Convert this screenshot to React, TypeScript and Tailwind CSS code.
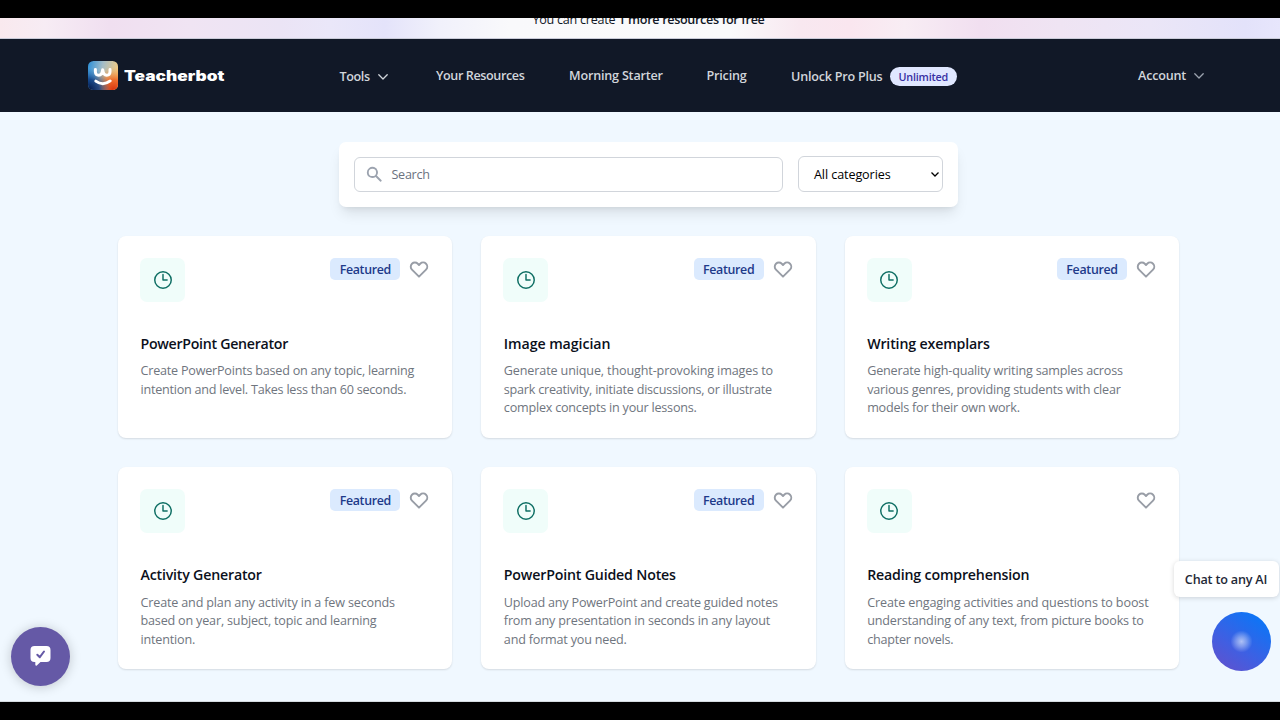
import React from "react";

type Line = { text: string; tracking: string };
type Tool = { title: string; titleTracking?: string; lines: Line[]; featured: boolean };

const tools: Tool[] = [
  {
    title: "PowerPoint Generator",
    titleTracking: "tracking-[-0.29px]",
    lines: [
      { text: "Create PowerPoints based on any topic, learning", tracking: "tracking-[-0.22px]" },
      { text: "intention and level. Takes less than 60 seconds.", tracking: "tracking-[-0.24px]" },
    ],
    featured: true,
  },
  {
    title: "Image magician",
    titleTracking: "tracking-[-0.08px]",
    lines: [
      { text: "Generate unique, thought-provoking images to", tracking: "tracking-[-0.14px]" },
      { text: "spark creativity, initiate discussions, or illustrate", tracking: "tracking-[-0.23px]" },
      { text: "complex concepts in your lessons.", tracking: "tracking-[-0.22px]" },
    ],
    featured: true,
  },
  {
    title: "Writing exemplars",
    lines: [
      { text: "Generate high-quality writing samples across", tracking: "tracking-[-0.18px]" },
      { text: "various genres, providing students with clear", tracking: "tracking-[-0.2px]" },
      { text: "models for their own work.", tracking: "tracking-[-0.22px]" },
    ],
    featured: true,
  },
  {
    title: "Activity Generator",
    titleTracking: "tracking-[-0.2px]",
    lines: [
      { text: "Create and plan any activity in a few seconds", tracking: "tracking-[-0.17px]" },
      { text: "based on year, subject, topic and learning", tracking: "tracking-[-0.19px]" },
      { text: "intention.", tracking: "tracking-[-0.18px]" },
    ],
    featured: true,
  },
  {
    title: "PowerPoint Guided Notes",
    titleTracking: "tracking-[-0.18px]",
    lines: [
      { text: "Upload any PowerPoint and create guided notes", tracking: "tracking-[-0.2px]" },
      { text: "from any presentation in seconds in any layout", tracking: "tracking-[-0.19px]" },
      { text: "and format you need.", tracking: "tracking-[-0.2px]" },
    ],
    featured: true,
  },
  {
    title: "Reading comprehension",
    titleTracking: "tracking-[-0.18px]",
    lines: [
      { text: "Create engaging activities and questions to boost", tracking: "tracking-[-0.13px]" },
      { text: "understanding of any text, from picture books to", tracking: "tracking-[-0.18px]" },
      { text: "chapter novels.", tracking: "tracking-[-0.22px]" },
    ],
    featured: false,
  },
];

function Chevron({ className }: { className: string }) {
  return (
    <svg className={className} viewBox="0 0 10 6" fill="none" stroke="currentColor" strokeWidth="1.3" strokeLinecap="round" strokeLinejoin="round">
      <path d="M0.8 0.8 L5 5 L9.2 0.8" />
    </svg>
  );
}

function Logo() {
  return (
    <svg className="h-[29px] w-[30px] shrink-0" viewBox="0 0 30 30" preserveAspectRatio="none">
      <defs>
        <linearGradient id="base" x1="0" y1="0" x2="1" y2="0.2">
          <stop offset="0" stopColor="#2b8fd8" />
          <stop offset="0.5" stopColor="#a3bdc8" />
          <stop offset="1" stopColor="#f0cb86" />
        </linearGradient>
        <radialGradient id="navy" cx="0" cy="1" r="0.75">
          <stop offset="0" stopColor="#03123f" />
          <stop offset="0.5" stopColor="#0a3b82" stopOpacity="0.85" />
          <stop offset="1" stopColor="#1c6fc0" stopOpacity="0" />
        </radialGradient>
        <radialGradient id="flame" cx="0.85" cy="1" r="0.8">
          <stop offset="0" stopColor="#d8330f" />
          <stop offset="0.45" stopColor="#ee6a28" stopOpacity="0.95" />
          <stop offset="1" stopColor="#f8a94a" stopOpacity="0" />
        </radialGradient>
        <clipPath id="tile"><rect width="30" height="30" rx="5.5" /></clipPath>
      </defs>
      <g clipPath="url(#tile)">
        <rect width="30" height="30" fill="url(#base)" />
        <rect width="30" height="30" fill="url(#flame)" />
        <rect width="30" height="30" fill="url(#navy)" />
      </g>
      <g fill="none" stroke="#fff" strokeWidth="3" strokeLinecap="round" strokeLinejoin="round">
        <path d="M7.4 8.8 V11.4 Q7.6 14.8 10.6 14.8 Q14.2 14.6 14.7 9 Q15.2 14.6 18.8 14.8 Q21.8 14.8 22 11.4 V8.8" />
        <path d="M7.8 20.8 Q15 26.2 22.2 20.6" />
      </g>
    </svg>
  );
}

function Card({ tool }: { tool: Tool }) {
  return (
    <article className="flex h-[202px] flex-col rounded-[8px] bg-white px-[22px] pt-[22px] shadow-[0_1px_2px_rgba(0,0,0,0.12)]">
      <div className="flex items-start justify-between">
        <div className="flex h-[44px] w-[45px] items-center justify-center rounded-[7px] bg-[#f0fdfa] text-[#0f6f64]">
          <svg className="h-[22px] w-[22px]" viewBox="0 0 24 24" fill="none" stroke="currentColor" strokeWidth="1.6" strokeLinecap="round" strokeLinejoin="round">
            <path d="M12 6v6h4.5m4.5 0a9 9 0 1 1-18 0 9 9 0 0 1 18 0Z" />
          </svg>
        </div>
        <div className="flex items-center gap-[8px]">
          {tool.featured && (
            <span className="flex h-[22px] w-[70px] items-center justify-center rounded-[5px] bg-[#dbeafe] pt-[2px] text-[12.4px] font-semibold tracking-[-0.32px] text-[#1e3a8a]">
              Featured
            </span>
          )}
          <svg className="h-[22px] w-[22px] text-[#989da6]" viewBox="0 0 24 24" fill="none" stroke="currentColor" strokeWidth="2.1" strokeLinecap="round" strokeLinejoin="round">
            <path d="M4.318 6.318a4.5 4.5 0 0 0 0 6.364L12 20.364l7.682-7.682a4.5 4.5 0 0 0-6.364-6.364L12 7.636l-1.318-1.318a4.5 4.5 0 0 0-6.364 0z" />
          </svg>
        </div>
      </div>
      <h3 className={`mt-[31px] pl-[0.5px] text-[14.2px] leading-[22px] font-semibold text-[#0b101b] ${tool.titleTracking ?? "tracking-[-0.16px]"}`}>{tool.title}</h3>
      <p className="mt-[7.4px] pl-[0.5px] text-[12.6px] leading-[18.45px] whitespace-nowrap text-[#6f757e]">
        {tool.lines.map((line) => (
          <span key={line.text} className={`block ${line.tracking}`}>{line.text}</span>
        ))}
      </p>
    </article>
  );
}

export default function App() {
  return (
    <div className="relative flex h-[720px] w-[1280px] flex-col overflow-hidden bg-black py-[18px] font-['Open_Sans',sans-serif]">
      <div className="flex h-[21px] shrink-0 items-start justify-center overflow-hidden border-b border-[#c9cbd8] bg-[linear-gradient(90deg,#f9e9ee_0px,#f7ecf4_45px,#f0dff0_110px,#f0e4f3_190px,#ebe4f5_280px,#eae7f9_330px,#e4e3fa_385px,#f1f1fb_440px,#f9f9fb_510px,#fafafb_730px,#f8e8f0_800px,#fae6ef_850px,#f8edf4_905px,#f1dff0_980px,#efe4f3_1060px,#ebe6f7_1150px,#e3e2fa_1245px,#e7e6fc_1280px)] pl-[17px]">
        <p className="mt-[-8px] text-[12.6px] leading-[20px] tracking-[-0.26px] whitespace-nowrap text-[#111827]">
          You can create <b className="font-semibold tracking-[-0.33px]">1 more resources for free</b>
        </p>
      </div>

      <header className="flex h-[73px] shrink-0 items-center bg-[#111827] text-[12.6px] font-semibold tracking-[-0.2px] whitespace-nowrap text-[#d1d5db]">
        <a className="ml-[88px] flex w-[251.5px] items-center gap-[5.5px]">
          <Logo />
          <span className="origin-left scale-x-[1.22] font-['Inter',sans-serif] text-[14.2px] leading-[20px] font-black tracking-normal text-white">Teacherbot</span>
        </a>
        <nav className="flex flex-1 items-center">
          <a className="flex w-[96.5px] items-center gap-[8px] pt-[3px] tracking-[-0.4px]">Tools <Chevron className="h-[6px] w-[10px]" /></a>
          <a className="w-[133px] pt-[2px] tracking-[-0.4px]">Your Resources</a>
          <a className="w-[137.5px] pt-[2px]">Morning Starter</a>
          <a className="w-[84.5px] pt-[2px]">Pricing</a>
          <a className="flex items-center gap-[7px] pt-[3px] tracking-[-0.22px]">
            Unlock Pro Plus
            <span className="mb-[1.5px] flex h-[19px] w-[67.5px] items-center justify-center rounded-full bg-[#e0e7ff] pt-[1.5px] text-[10.8px] font-semibold text-[#3730a3]">Unlimited</span>
          </a>
        </nav>
        <a className="flex w-[142px] items-center gap-[8px] pt-[2px]">Account <Chevron className="h-[6px] w-[10px] text-[#9ca3af]" /></a>
      </header>

      <main className="flex flex-1 flex-col border-b border-[#d5dbe0] bg-[#f0f8ff] pt-[30px]">
        <section className="ml-[339px] flex h-[64.5px] w-[619px] items-start gap-[15px] rounded-[7px] bg-white px-[15px] pt-[14px] text-[12.6px] shadow-[0_9px_14px_-3px_rgba(0,0,0,0.1),0_4px_6px_-4px_rgba(0,0,0,0.1)]">
          <div className="mt-[1px] flex h-[35px] flex-1 items-center gap-[8px] rounded-[6px] border border-[#d1d5db] pl-[10px] tracking-[-0.3px] text-[#6b7280]">
            <svg className="h-[18.5px] w-[18.5px] text-[#9ca3af]" viewBox="0 0 20 20" fill="currentColor">
              <path fillRule="evenodd" clipRule="evenodd" d="M8 4a4 4 0 1 0 0 8 4 4 0 0 0 0-8ZM2 8a6 6 0 1 1 10.89 3.476l4.817 4.817a1 1 0 0 1-1.414 1.414l-4.816-4.816A6 6 0 0 1 2 8Z" />
            </svg>
            <span className="pt-[1px]">Search</span>
          </div>
          <div className="flex h-[36px] w-[145px] items-center justify-between rounded-[6px] border border-[#d1d5db] pr-[3px] pl-[15px] tracking-[-0.1px] text-black">
            <span className="pt-[2.5px]">All categories</span>
            <svg className="h-[5px] w-[8px]" viewBox="0 0 8 5" fill="none" stroke="currentColor" strokeWidth="1.3">
              <path d="M0.5 0.5 L4 4 L7.5 0.5" />
            </svg>
          </div>
        </section>

        <section className="mt-[29.5px] ml-[118px] grid w-[1061px] grid-cols-3 gap-x-[29px] gap-y-[29.4px]">
          {tools.map((tool) => (
            <Card key={tool.title} tool={tool} />
          ))}
        </section>
      </main>

      <button className="absolute top-[626.5px] left-[11px] flex h-[59px] w-[59px] items-center justify-center rounded-full bg-[#6559a6] shadow-[0_1px_12px_rgba(0,0,0,0.2)]">
        <svg className="h-[20px] w-[21px]" viewBox="0 0 21 20">
          <path fill="#fff" d="M4.5 0 H16.5 Q20.5 0 20.5 4 V12 Q20.5 16 16.5 16 H10.5 L6.8 19.5 Q5.3 20.2 5.3 18.6 V16 H4.5 Q0.5 16 0.5 12 V4 Q0.5 0 4.5 0Z" />
          <path d="M7.3 8.7 L9.8 11.2 L14 5.5" fill="none" stroke="#6559a6" strokeWidth="2" strokeLinecap="round" strokeLinejoin="round" />
        </svg>
      </button>

      <div className="absolute top-[561px] left-[1174px] flex h-[36px] w-[105px] items-center justify-center rounded-[6px] bg-white pt-[3px] pr-[1px] text-[12.6px] font-semibold tracking-[-0.19px] whitespace-nowrap text-[#1f2937] shadow-[0_1px_5px_rgba(0,0,0,0.16)]">
        Chat to any AI
      </div>
      <button className="absolute top-[612px] left-[1212px] h-[59px] w-[59px] rounded-full bg-[radial-gradient(circle_at_50%_50%,rgba(255,255,255,0.6)_0,rgba(255,255,255,0.35)_5px,rgba(255,255,255,0)_11px),linear-gradient(215deg,#0f74f5_15%,#3f5fe2_60%,#6251cc_95%)]" />
    </div>
  );
}
